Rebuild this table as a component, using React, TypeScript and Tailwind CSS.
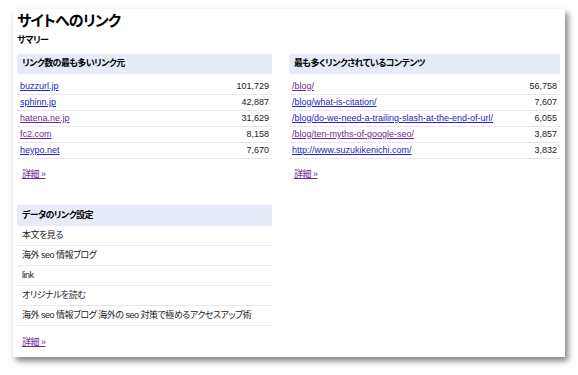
import React from 'react';

type LinkRow = { label: string; count: string; visited?: boolean };

const sources: LinkRow[] = [
  { label: 'buzzurl.jp', count: '101,729' },
  { label: 'sphinn.jp', count: '42,887' },
  { label: 'hatena.ne.jp', count: '31,629', visited: true },
  { label: 'fc2.com', count: '8,158', visited: true },
  { label: 'heypo.net', count: '7,670' },
];

const contents: LinkRow[] = [
  { label: '/blog/', count: '56,758', visited: true },
  { label: '/blog/what-is-citation/', count: '7,607' },
  { label: '/blog/do-we-need-a-trailing-slash-at-the-end-of-url/', count: '6,055' },
  { label: '/blog/ten-myths-of-google-seo/', count: '3,857', visited: true },
  { label: 'http://www.suzukikenichi.com/', count: '3,832' },
];

const anchors = [
  '本文を見る',
  '海外 seo 情報ブログ',
  'link',
  'オリジナルを読む',
  '海外 seo 情報ブログ 海外の seo 対策で極めるアクセスアップ術',
];

const linkClass = (visited?: boolean) =>
  visited ? 'underline text-[#6a2b96]' : 'underline text-[#2323c8]';

const DetailLink = ({ className }: { className: string }) => (
  <div className={`text-[9px] leading-[11px] ${className}`}>
    <span className="underline text-[#6a2b96] tracking-[-0.5px]">詳細 »</span>
  </div>
);

const LinkTable = ({ title, rows, width }: { title: string; rows: LinkRow[]; width: string }) => (
  <div className={width}>
    <div className="h-[20px] bg-[#e6ebf7] flex items-center pl-[5px] text-[9px] font-bold text-black tracking-[-0.6px]">{title}</div>
    <div className="mt-[5px]">
      {rows.map((r) => (
        <div key={r.label} className="h-[16px] border-b border-[#e8e8e8] flex items-center justify-between px-[3px] text-[9px]">
          <span className={linkClass(r.visited)}>{r.label}</span>
          <span className="text-[#222]">{r.count}</span>
        </div>
      ))}
    </div>
    <DetailLink className="mt-[10px] pl-[5px]" />
  </div>
);

export default function App() {
  return (
    <div className="min-h-screen bg-white pt-[9px] pl-[13px] font-['Liberation_Sans','Noto_Sans_CJK_JP',sans-serif] [font-feature-settings:'palt'] text-black">
      <div className="w-[552px] h-[348px] bg-white pl-[4px] pt-[2px] shadow-[3px_4px_6px_rgba(0,0,0,0.5)]">
        <h1 className="text-[15px] leading-[20px] font-bold tracking-[-0.8px]">サイトへのリンク</h1>
        <div className="mt-[3px] text-[9px] leading-[12px] font-bold tracking-[-0.5px]">サマリー</div>

        <div className="mt-[8px] flex gap-[17px]">
          <LinkTable title="リンク数の最も多いリンク元" rows={sources} width="w-[255px]" />
          <LinkTable title="最も多くリンクされているコンテンツ" rows={contents} width="w-[271px]" />
        </div>

        <div className="mt-[25px] w-[255px]">
          <div className="h-[21px] bg-[#e6ebf7] flex items-center pl-[5px] text-[9px] font-bold tracking-[-0.6px]">データのリンク設定</div>
          {anchors.map((a) => (
            <div key={a} className="h-[20px] border-b border-[#e8e8e8] flex items-center pl-[5px] text-[9px] text-[#222] tracking-[-0.5px]">
              {a}
            </div>
          ))}
          <DetailLink className="mt-[11px] pl-[5px]" />
        </div>
      </div>
    </div>
  );
}
